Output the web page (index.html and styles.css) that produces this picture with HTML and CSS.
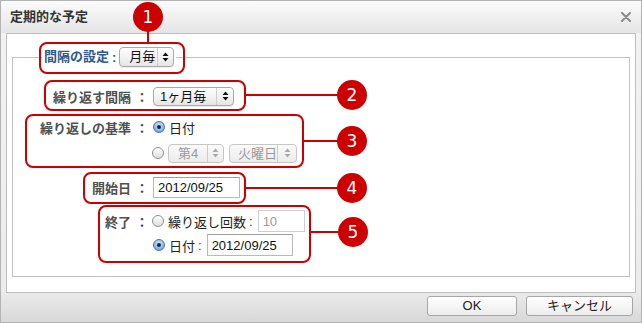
FILE: index.html
```html
<!DOCTYPE html>
<html lang="ja">
<head>
<meta charset="utf-8">
<title>定期的な予定</title>
<link rel="stylesheet" href="styles.css">
</head>
<body>
<div class="page">
  <div class="dialog">
    <div class="titlebar">
      <span class="title">定期的な予定</span>
      <svg class="close" width="10" height="10" viewBox="0 0 10 10"><path d="M1 1L9 9M9 1L1 9" stroke="#8a8a8a" stroke-width="2" stroke-linecap="round"/></svg>
    </div>
    <div class="body">
      <fieldset class="fs">
        <legend class="lg">
          <span class="lg-text">間隔の設定</span><span class="lg-colon">:</span>
          <span class="select s-month"><span class="sel-text">月毎</span><span class="sel-arrow"><svg width="7" height="10" viewBox="0 0 7 10"><path d="M3.5 0.5L6.5 4H0.5Z M3.5 9.5L6.5 6H0.5Z" fill="#111"/></svg></span></span>
        </legend>
        <div class="rows">
          <div class="row r2">
            <span class="label">繰り返す間隔</span><span class="colon">：</span>
            <div class="ctl">
              <span class="select s-every"><span class="sel-text">1ヶ月毎</span><span class="sel-arrow"><svg width="7" height="10" viewBox="0 0 7 10"><path d="M3.5 0.5L6.5 4H0.5Z M3.5 9.5L6.5 6H0.5Z" fill="#111"/></svg></span></span>
            </div>
          </div>
          <div class="row r3">
            <span class="label">繰り返しの基準</span><span class="colon">：</span>
            <div class="ctl col">
              <div class="line l-a"><span class="radio on"></span><span class="opt">日付</span></div>
              <div class="line l-b"><span class="radio off"></span>
                <span class="select dis s-week"><span class="sel-text">第4</span><span class="sel-arrow"><svg width="7" height="10" viewBox="0 0 7 10"><path d="M3.5 0.5L6.5 4H0.5Z M3.5 9.5L6.5 6H0.5Z" fill="#aaa"/></svg></span></span>
                <span class="select dis s-day"><span class="sel-text">火曜日</span><span class="sel-arrow"><svg width="7" height="10" viewBox="0 0 7 10"><path d="M3.5 0.5L6.5 4H0.5Z M3.5 9.5L6.5 6H0.5Z" fill="#aaa"/></svg></span></span>
              </div>
            </div>
          </div>
          <div class="row r4">
            <span class="label">開始日</span><span class="colon">：</span>
            <div class="ctl"><span class="input i-start">2012/09/25</span></div>
          </div>
          <div class="row r5">
            <span class="label">終了</span><span class="colon">：</span>
            <div class="ctl col">
              <div class="line l-c"><span class="radio off"></span><span class="opt">繰り返し回数</span><span class="sub-colon">:</span><span class="input dis i-count">10</span></div>
              <div class="line l-d"><span class="radio on"></span><span class="opt">日付</span><span class="sub-colon">:</span><span class="input i-end">2012/09/25</span></div>
            </div>
          </div>
        </div>
      </fieldset>
    </div>
    <div class="footer">
      <button class="btn b-ok">OK</button>
      <button class="btn b-cancel">キャンセル</button>
    </div>
  </div>

  <div class="rbox bx1"></div>
  <div class="rbox bx2"></div>
  <div class="rbox bx3"></div>
  <div class="rbox bx4"></div>
  <div class="rbox bx5"></div>
  <div class="rline ln1"></div>
  <div class="rline ln2"></div>
  <div class="rline ln3"></div>
  <div class="rline ln4"></div>
  <div class="rline ln5"></div>
  <div class="num n1">1</div>
  <div class="num n2">2</div>
  <div class="num n3">3</div>
  <div class="num n4">4</div>
  <div class="num n5">5</div>
</div>
</body>
</html>
```

FILE: styles.css
```css
* { box-sizing: border-box; }
html, body { margin: 0; padding: 0; background: #fff; }
body {
  font-family: "Liberation Sans", "Noto Sans CJK JP", sans-serif;
  font-size: 13px;
  color: #222;
}
.page { position: relative; width: 642px; height: 323px; }
.dialog {
  width: 642px;
  height: 323px;
  border: 1px solid #b3b3b3;
  display: flex;
  flex-direction: column;
  background: linear-gradient(to bottom, #f3f3f3 0, #ececec 290px, #d8d8d8 100%);
}
.titlebar {
  height: 32px;
  flex: none;
  display: flex;
  align-items: center;
  justify-content: space-between;
  padding: 0 10px 0 9px;
  background: linear-gradient(to bottom, #fbfbfb, #e5e5e5);
}
.title { font-weight: bold; color: #333; line-height: 16px; }
.close { display: block; }
.body {
  flex: none;
  height: 260px;
  margin: 0 5px;
  border: 1px solid #bebebe;
  background: #fff;
  padding-top: 13px;
}
.fs {
  margin: 0 5px;
  padding: 0;
  height: 230px;
  border: 1px solid #c2c2c2;
  min-inline-size: 0;
}
.lg {
  margin-left: 29px;
  padding: 0 2px;
  height: 20px;
  display: flex;
  align-items: center;
}
.lg-text { font-weight: bold; color: #30598c; line-height: 20px; }
.lg-colon { font-weight: bold; color: #30598c; margin: 0 3px 0 3px; }
.select {
  display: inline-flex;
  align-items: stretch;
  height: 19px;
  border: 1px solid #a9a9a9;
  border-radius: 4px;
  background: linear-gradient(to bottom, #ffffff, #e6e6e6);
  box-shadow: 0 1px 1px rgba(0,0,0,0.08);
  color: #111;
  line-height: 17px;
}
.sel-text { flex: 1; white-space: nowrap; }
.sel-arrow {
  display: flex;
  align-items: center;
  justify-content: center;
  border-left: 1px solid #cdcdcd;
}
.sel-arrow svg { display: block; }
.s-month { width: 55px; height: 20px; line-height: 18px; }
.s-month .sel-text { padding-left: 9px; }
.s-month .sel-arrow { width: 16px; }
.s-every { width: 81px; }
.s-every .sel-text { padding-left: 6px; }
.s-every .sel-arrow { width: 17px; }
.select.dis { color: #9a9a9a; border-color: #c6c6c6; background: linear-gradient(to bottom, #fafafa, #ececec); box-shadow: none; }
.s-week { width: 56px; margin-left: 4px; }
.s-week .sel-text { padding-left: 9px; }
.s-week .sel-arrow { width: 16px; }
.s-day { width: 68px; margin-left: 5px; }
.s-day .sel-text { padding-left: 8px; }
.s-day .sel-arrow { width: 19px; }

.rows { padding-top: 19px; }
.row {
  display: grid;
  grid-template-columns: 118px 22px auto;
  align-items: start;
}
.label, .colon {
  height: var(--h);
  display: flex;
  align-items: center;
  font-weight: bold;
  color: #505050;
}
.label { justify-content: flex-end; white-space: nowrap; }
.colon { justify-content: center; }
.ctl { display: flex; align-items: center; height: var(--h); }
.ctl.col { flex-direction: column; align-items: flex-start; height: auto; }
.r2 { --h: 20px; }
.r3 { --h: 20px; margin-top: 11px; }
.r4 { --h: 21px; margin-top: 14px; }
.r5 { --h: 22px; margin-top: 12px; }
.line { display: flex; align-items: center; }
.l-a { height: 20px; }
.l-b { height: 20px; margin-top: 6px; margin-left: -1px; }
.l-c { height: 22px; margin-left: -1px; }
.l-d { height: 22px; margin-top: 2px; }
.opt { color: #222; margin-left: 4px; white-space: nowrap; }
.sub-colon { color: #333; margin: 0 5px 0 3px; }

.radio {
  width: 12px;
  height: 12px;
  border-radius: 50%;
  flex: none;
  position: relative;
}
.radio.off {
  border: 1px solid #8f8f8f;
  background: linear-gradient(to bottom, #ffffff, #dedede);
}
.radio.on {
  border: 1px solid #4a76b0;
  background: radial-gradient(circle at 50% 35%, #d9ebfc 0, #8ebbe9 55%, #5a92d3 100%);
}
.radio.on::after {
  content: "";
  position: absolute;
  left: 3px;
  top: 3px;
  width: 4px;
  height: 4px;
  border-radius: 50%;
  background: #1c2535;
}

.input {
  display: inline-flex;
  align-items: center;
  border: 1px solid #b9b9b9;
  border-top-color: #a0a0a0;
  background: #fff;
  color: #111;
  padding-left: 4px;
  font-family: "Liberation Sans", sans-serif;
}
.i-start { width: 87px; height: 21px; }
.i-count { width: 47px; height: 22px; color: #9a9a9a; border-color: #cfcfcf; }
.i-end { width: 86px; height: 22px; }

.footer {
  flex: 1;
  display: flex;
  justify-content: flex-end;
  align-items: flex-start;
  padding: 3px 8px 0 0;
  gap: 9px;
}
.btn {
  height: 20px;
  border: 1px solid #a6a6a6;
  border-radius: 3px;
  background: linear-gradient(to bottom, #ffffff, #ececec);
  font-family: "Liberation Sans", "Noto Sans CJK JP", sans-serif;
  font-size: 13px;
  color: #222;
  padding: 0;
  line-height: 18px;
}
.b-ok { width: 90px; }
.b-cancel { width: 107px; }

.rbox {
  position: absolute;
  border: 2px solid #cc0000;
  border-radius: 8px;
}
.bx1 { left: 39px; top: 42px; width: 146px; height: 32px; }
.bx2 { left: 44px; top: 80px; width: 202px; height: 31px; }
.bx3 { left: 25px; top: 114px; width: 279px; height: 54px; }
.bx4 { left: 83px; top: 172px; width: 163px; height: 32px; }
.bx5 { left: 98px; top: 205px; width: 213px; height: 58px; }
.rline { position: absolute; background: #cc0000; }
.ln1 { left: 147px; top: 30px; width: 2px; height: 13px; }
.ln2 { left: 245px; top: 94px; width: 93px; height: 2px; }
.ln3 { left: 303px; top: 140px; width: 35px; height: 2px; }
.ln4 { left: 245px; top: 187px; width: 93px; height: 2px; }
.ln5 { left: 310px; top: 231px; width: 28px; height: 2px; }
.num {
  position: absolute;
  width: 30px;
  height: 30px;
  border-radius: 50%;
  background: #cc0000;
  color: #fff;
  font-family: "DejaVu Sans", sans-serif;
  font-size: 17px;
  display: flex;
  align-items: center;
  justify-content: center;
  line-height: 1;
}
.n1 { left: 133px; top: 2px; }
.n2 { left: 337px; top: 80px; }
.n3 { left: 337px; top: 126px; }
.n4 { left: 337px; top: 173px; }
.n5 { left: 338px; top: 217px; }
```
